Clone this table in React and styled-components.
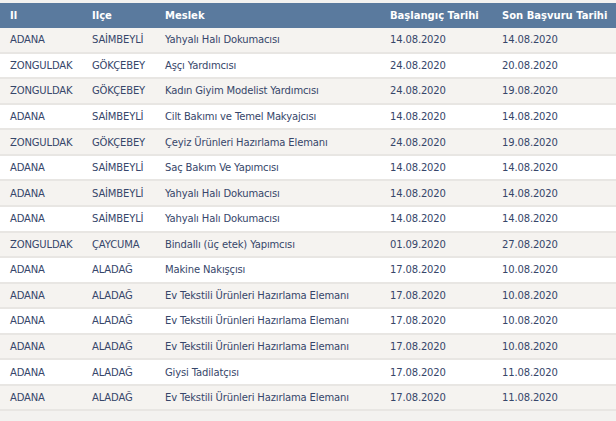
import React from 'react';
import styled, { createGlobalStyle } from 'styled-components';

const rows = [
  ['ADANA', 'SAİMBEYLİ', 'Yahyalı Halı Dokumacısı', '14.08.2020', '14.08.2020'],
  ['ZONGULDAK', 'GÖKÇEBEY', 'Aşçı Yardımcısı', '24.08.2020', '20.08.2020'],
  ['ZONGULDAK', 'GÖKÇEBEY', 'Kadın Giyim Modelist Yardımcısı', '24.08.2020', '19.08.2020'],
  ['ADANA', 'SAİMBEYLİ', 'Cilt Bakımı ve Temel Makyajcısı', '14.08.2020', '14.08.2020'],
  ['ZONGULDAK', 'GÖKÇEBEY', 'Çeyiz Ürünleri Hazırlama Elemanı', '24.08.2020', '19.08.2020'],
  ['ADANA', 'SAİMBEYLİ', 'Saç Bakım Ve Yapımcısı', '14.08.2020', '14.08.2020'],
  ['ADANA', 'SAİMBEYLİ', 'Yahyalı Halı Dokumacısı', '14.08.2020', '14.08.2020'],
  ['ADANA', 'SAİMBEYLİ', 'Yahyalı Halı Dokumacısı', '14.08.2020', '14.08.2020'],
  ['ZONGULDAK', 'ÇAYCUMA', 'Bindallı (üç etek) Yapımcısı', '01.09.2020', '27.08.2020'],
  ['ADANA', 'ALADAĞ', 'Makine Nakışçısı', '17.08.2020', '10.08.2020'],
  ['ADANA', 'ALADAĞ', 'Ev Tekstili Ürünleri Hazırlama Elemanı', '17.08.2020', '10.08.2020'],
  ['ADANA', 'ALADAĞ', 'Ev Tekstili Ürünleri Hazırlama Elemanı', '17.08.2020', '10.08.2020'],
  ['ADANA', 'ALADAĞ', 'Ev Tekstili Ürünleri Hazırlama Elemanı', '17.08.2020', '10.08.2020'],
  ['ADANA', 'ALADAĞ', 'Giysi Tadilatçısı', '17.08.2020', '11.08.2020'],
  ['ADANA', 'ALADAĞ', 'Ev Tekstili Ürünleri Hazırlama Elemanı', '17.08.2020', '11.08.2020'],
];

const columns = [
  { title: 'Il', width: 82 },
  { title: 'Ilçe', width: 73 },
  { title: 'Meslek', width: 225 },
  { title: 'Başlangıç Tarihi', width: 112 },
  { title: 'Son Başvuru Tarihi', width: 124 },
];

const App = () => {
  return (
    <>
      <GlobalStyle />
      <Page>
        <Table>
          <colgroup>
            {columns.map((c) => (
              <col key={c.title} style={{ width: c.width }} />
            ))}
          </colgroup>
          <thead>
            <tr>
              {columns.map((c) => (
                <Th key={c.title}>{c.title}</Th>
              ))}
            </tr>
          </thead>
          <tbody>
            {rows.map((r, i) => (
              <Row key={i} $odd={i % 2 === 0}>
                {r.map((cell, j) => (
                  <Td key={j}>{cell}</Td>
                ))}
              </Row>
            ))}
          </tbody>
        </Table>
      </Page>
    </>
  );
};

export default App;

const GlobalStyle = createGlobalStyle`
  body {
    margin: 0;
    background: #f3f2f0;
    font-family: "DejaVu Sans", Verdana, sans-serif;
  }
`;

const Page = styled.div`
  width: 616px;
  height: 421px;
  padding-top: 3px;
  box-sizing: border-box;
  overflow: hidden;
  background: #f3f2f0;
`;

const Table = styled.table`
  width: 616px;
  table-layout: fixed;
  border-collapse: separate;
  border-spacing: 0;
`;

const Th = styled.th`
  height: 25px;
  padding: 0 0 0 10px;
  text-align: left;
  background: #5a7a9e;
  color: #ffffff;
  font-size: 10px;
  font-weight: bold;
  white-space: nowrap;
`;

const Row = styled.tr`
  background: ${(p) => (p.$odd ? '#f5f3f0' : '#ffffff')};
`;

const Td = styled.td`
  height: 23.57px;
  padding: 0 0 0 10px;
  border-bottom: 2px solid #e8e6e3;
  color: #36466a;
  font-size: 10px;
  letter-spacing: -0.15px;
  white-space: nowrap;
`;
